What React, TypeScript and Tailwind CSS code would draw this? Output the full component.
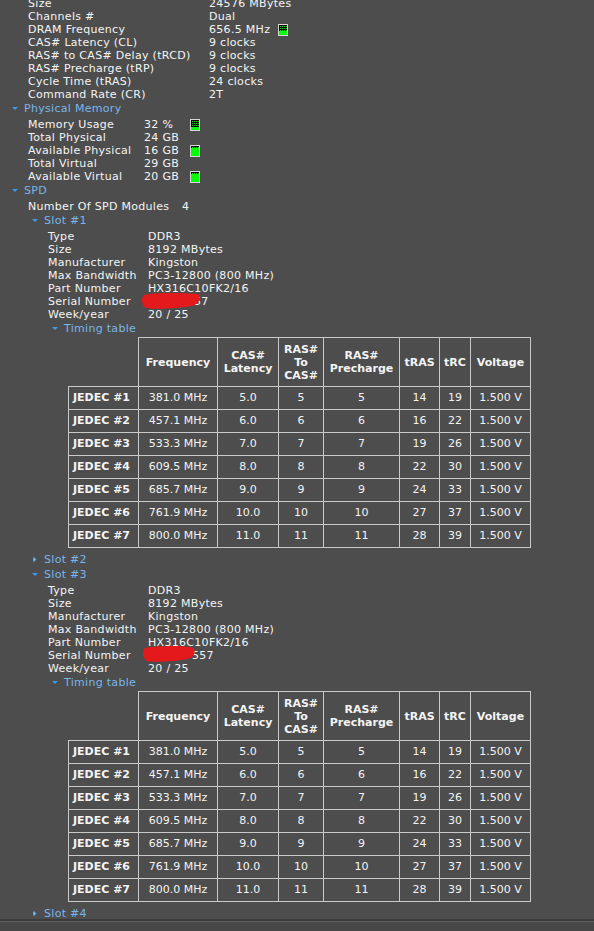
import React from 'react'

type Item = { label: string; value: string; meter?: number }

const MEM_CTRL: Item[] = [
  { label: 'Size', value: '24576 MBytes' },
  { label: 'Channels #', value: 'Dual' },
  { label: 'DRAM Frequency', value: '656.5 MHz', meter: 6 },
  { label: 'CAS# Latency (CL)', value: '9 clocks' },
  { label: 'RAS# to CAS# Delay (tRCD)', value: '9 clocks' },
  { label: 'RAS# Precharge (tRP)', value: '9 clocks' },
  { label: 'Cycle Time (tRAS)', value: '24 clocks' },
  { label: 'Command Rate (CR)', value: '2T' },
]

const PHYSICAL: Item[] = [
  { label: 'Memory Usage', value: '32 %', meter: 7 },
  { label: 'Total Physical', value: '24 GB' },
  { label: 'Available Physical', value: '16 GB', meter: 2 },
  { label: 'Total Virtual', value: '29 GB' },
  { label: 'Available Virtual', value: '20 GB', meter: 2 },
]

const SLOT: Item[] = [
  { label: 'Type', value: 'DDR3' },
  { label: 'Size', value: '8192 MBytes' },
  { label: 'Manufacturer', value: 'Kingston' },
  { label: 'Max Bandwidth', value: 'PC3-12800 (800 MHz)' },
  { label: 'Part Number', value: 'HX316C10FK2/16' },
]

const JEDEC = [
  ['JEDEC #1', '381.0 MHz', '5.0', '5', '5', '14', '19', '1.500 V'],
  ['JEDEC #2', '457.1 MHz', '6.0', '6', '6', '16', '22', '1.500 V'],
  ['JEDEC #3', '533.3 MHz', '7.0', '7', '7', '19', '26', '1.500 V'],
  ['JEDEC #4', '609.5 MHz', '8.0', '8', '8', '22', '30', '1.500 V'],
  ['JEDEC #5', '685.7 MHz', '9.0', '9', '9', '24', '33', '1.500 V'],
  ['JEDEC #6', '761.9 MHz', '10.0', '10', '10', '27', '37', '1.500 V'],
  ['JEDEC #7', '800.0 MHz', '11.0', '11', '11', '28', '39', '1.500 V'],
]

// little green gauge next to some values
function Meter({ dark }: { dark: number }) {
  const dots: React.ReactNode[] = []
  for (let y = 2; y <= dark; y += 2) {
    for (let x = 2; x <= 8; x += 2) {
      dots.push(<rect key={x + '-' + y} x={x} y={y} width="1" height="1" fill="#1fd21f" />)
    }
  }
  return (
    <svg width="10" height="12" viewBox="0 0 10 12" className="shrink-0">
      <rect x="0.5" y="0.5" width="9" height="11" fill="none" stroke="#d6d6d6" />
      <rect x="1" y="1" width="8" height={dark} fill="#050505" />
      {dots}
      <rect x="1" y={1 + dark} width="8" height={10 - dark} fill="#00ff00" />
    </svg>
  )
}

function Tri({ open }: { open: boolean }) {
  return open ? (
    <svg width="12" height="6" viewBox="0 0 12 6" className="shrink-0">
      <path d="M0 1 L6 1 L3 4 Z" fill="#3d9be6" />
    </svg>
  ) : (
    <svg width="12" height="8" viewBox="0 0 12 8" className="shrink-0">
      <path d="M1.5 0.5 L4.5 3.5 L1.5 6.5 Z" fill="#3d9be6" />
      <path d="M1.5 1.5 L3.5 3.5 L1.5 5.5 Z" fill="#8fc8f2" />
    </svg>
  )
}

function Header({ title, open, pad }: { title: string; open: boolean; pad: string }) {
  return (
    <div className={'flex items-center h-[15px] leading-[15px] text-[#78b6ea] ' + pad}>
      <Tri open={open} />
      <span>{title}</span>
    </div>
  )
}

function Row({ item, pad, labelW, valueW }: { item: Item; pad: string; labelW: string; valueW?: string }) {
  return (
    <div className={'flex items-center h-[13px] leading-[13px] whitespace-nowrap ' + pad}>
      <span className={'shrink-0 ' + labelW}>{item.label}</span>
      <span className={'shrink-0 ' + (valueW ?? '')}>{item.value}</span>
      {item.meter !== undefined && <Meter dark={item.meter} />}
    </div>
  )
}

// red marker hiding the serial number
function Scribble({ wide }: { wide: boolean }) {
  return wide ? (
    <svg width="58" height="16" viewBox="0 0 58 16" className="absolute left-[-6px] top-[-2px]">
      <path d="M2 2 C12 -1 46 0 56 1 C59 4 58 11 50 13 C38 15 16 17 4 15 C-1 12 -1 4 2 2 Z" fill="#e3191b" />
    </svg>
  ) : (
    <svg width="52" height="16" viewBox="0 0 52 16" className="absolute left-[-5px] top-[-3px]">
      <path d="M2 2 C12 0 42 -1 50 2 C53 5 52 11 45 13 C34 15 14 17 4 15 C-1 12 -1 4 2 2 Z" fill="#e3191b" />
    </svg>
  )
}

function TimingTable() {
  const cell = 'border border-[#c9c9c9] text-center whitespace-nowrap'
  return (
    <table className="ml-[68px] mb-[4px] border-collapse table-fixed w-[462px] tracking-normal">
      <colgroup>
        <col className="w-[70px]" />
        <col className="w-[79px]" />
        <col className="w-[61px]" />
        <col className="w-[45px]" />
        <col className="w-[76px]" />
        <col className="w-[40px]" />
        <col className="w-[31px]" />
        <col className="w-[60px]" />
      </colgroup>
      <thead>
        <tr className="h-[49px] font-bold leading-[13px]">
          <th className="border-0" />
          <th className={cell}>Frequency</th>
          <th className={cell}>CAS#<br />Latency</th>
          <th className={cell}>RAS#<br />To<br />CAS#</th>
          <th className={cell}>RAS#<br />Precharge</th>
          <th className={cell}>tRAS</th>
          <th className={cell}>tRC</th>
          <th className={cell}>Voltage</th>
        </tr>
      </thead>
      <tbody>
        {JEDEC.map((r) => (
          <tr key={r[0]} className="h-[23px]">
            {r.map((v, i) => (
              <td key={i} className={i === 0 ? 'border border-[#c9c9c9] font-bold pl-[4px] whitespace-nowrap' : cell}>
                {v}
              </td>
            ))}
          </tr>
        ))}
      </tbody>
    </table>
  )
}

function Slot({ name, wide }: { name: string; wide: boolean }) {
  return (
    <div>
      <Header title={name} open pad="pl-[32px]" />
      <div className="pt-[2px]">
        {SLOT.map((it) => (
          <Row key={it.label} item={it} pad="pl-[48px]" labelW="w-[100px]" />
        ))}
        <div className="flex items-center h-[13px] leading-[13px] whitespace-nowrap pl-[48px]">
          <span className="shrink-0 w-[100px]">Serial Number</span>
          <span className="relative shrink-0">
            <span className={'inline-block ' + (wide ? 'w-[46px]' : 'w-[44px]')} />
            {wide ? '57' : '557'}
            <Scribble wide={wide} />
          </span>
        </div>
        <Row item={{ label: 'Week/year', value: '20 / 25' }} pad="pl-[48px]" labelW="w-[100px]" />
        <Header title="Timing table" open pad="pl-[52px]" />
        <div className="pt-[1px]">
          <TimingTable />
        </div>
      </div>
    </div>
  )
}

export default function App() {
  return (
    <div className="h-[931px] w-[594px] overflow-hidden flex flex-col bg-[#4d4d4d] text-[#f4f4f4] text-[11px] tracking-[0.3px] font-['DejaVu_Sans',sans-serif]">
      <div className="flex-1 overflow-hidden">
        <div className="mt-[-3px]">
          {MEM_CTRL.map((it) => (
            <Row key={it.label} item={it} pad="pl-[28px]" labelW="w-[181px]" valueW="w-[69px]" />
          ))}
          <Header title="Physical Memory" open pad="pl-[12px]" />
          <div className="pt-[2px]">
            {PHYSICAL.map((it) => (
              <Row key={it.label} item={it} pad="pl-[28px]" labelW="w-[116px]" valueW="w-[46px]" />
            ))}
          </div>
          <Header title="SPD" open pad="pl-[12px]" />
          <div className="pt-[2px]">
            <Row item={{ label: 'Number Of SPD Modules', value: '4' }} pad="pl-[28px]" labelW="w-[154px]" />
            <Slot name="Slot #1" wide />
            <Header title="Slot #2" open={false} pad="pl-[32px]" />
            <Slot name="Slot #3" wide={false} />
            <Header title="Slot #4" open={false} pad="pl-[32px]" />
          </div>
        </div>
      </div>
      <div className="h-[12px] shrink-0 border-t-2 border-[#3b3b3b] bg-[#474747]">
        <div className="h-[1px] bg-[#5e5e5e]" />
      </div>
    </div>
  )
}
